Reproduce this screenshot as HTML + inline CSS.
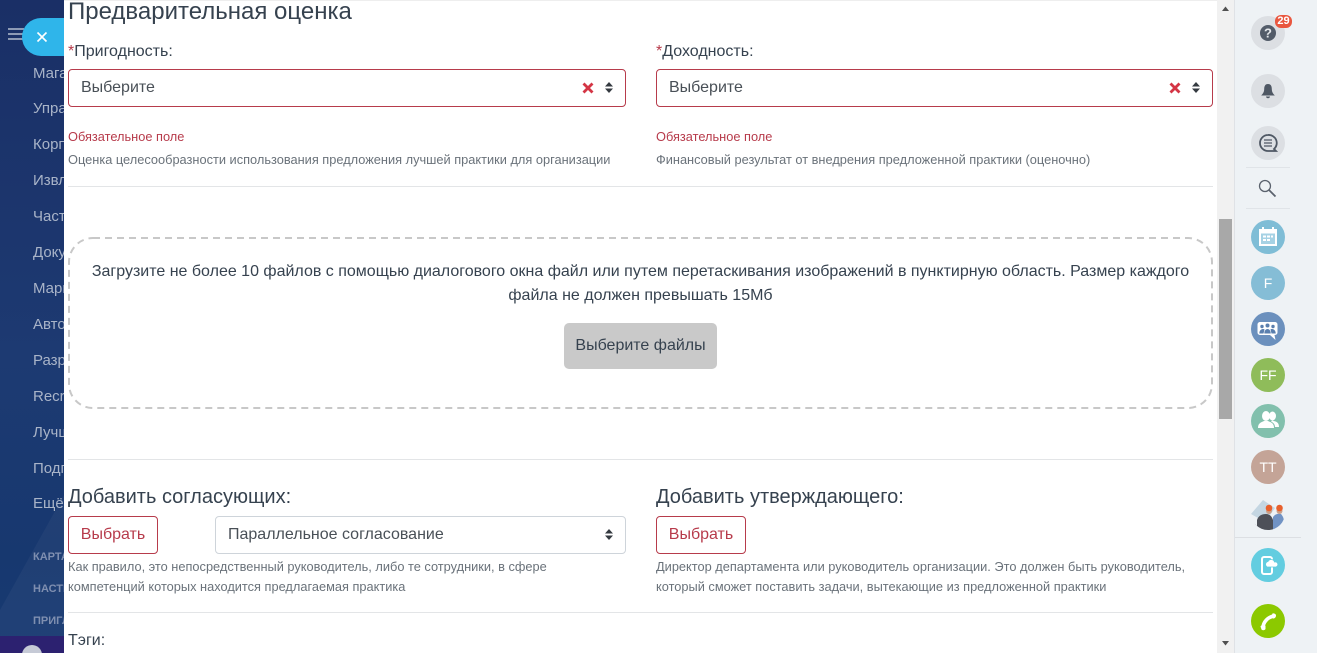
<!DOCTYPE html>
<html lang="ru">
<head>
<meta charset="utf-8">
<title>Предварительная оценка</title>
<style>
html,body{margin:0;padding:0;width:1317px;height:653px;overflow:hidden;background:#fff;}
body{position:relative;font-family:"Liberation Sans","Noto Sans CJK SC",sans-serif;color:#36424f;}
.a{position:absolute;white-space:nowrap;}
#side{position:absolute;left:0;top:0;width:64px;height:653px;overflow:hidden;background:linear-gradient(180deg,#1a2f66 0%,#1d3a72 55%,#17386f 85%,#173a72 100%);}
#side .m{position:absolute;left:33px;font-size:15px;color:#a9b4c8;white-space:nowrap;line-height:18px;}
#side .s{position:absolute;left:33px;font-size:11px;font-weight:bold;color:#7f8fb0;white-space:nowrap;line-height:12px;}
.sel{position:absolute;box-sizing:border-box;height:38px;border:1px solid #b73b4b;border-radius:4px;background:#fff;font-size:16px;line-height:36px;padding-left:12px;color:#495057;}
.lab{position:absolute;font-size:16px;line-height:20px;color:#36424f;white-space:nowrap;}
.lab i{font-style:normal;color:#b73b4b;}
.err{position:absolute;font-size:12.8px;line-height:16px;color:#b73b4b;white-space:nowrap;}
.hint{position:absolute;font-size:12.8px;line-height:20px;color:#6a727a;white-space:nowrap;}
.hr{position:absolute;height:1px;background:#e3e5e7;left:68px;width:1145px;}
.btn{position:absolute;box-sizing:border-box;top:516px;height:38px;border:1px solid #b73b4b;border-radius:4px;font-size:16px;line-height:36px;text-align:center;color:#b73b4b;background:#fff;}
.h2{position:absolute;font-size:20px;line-height:24px;color:#36424f;white-space:nowrap;}
.c{position:absolute;left:1251px;width:34px;height:34px;border-radius:50%;text-align:center;line-height:34px;color:#fff;font-size:14px;}
</style>
</head>
<body>
<div id="side">
  <svg style="position:absolute;left:0;top:380px" width="64" height="273"><polygon points="0,230 64,115 64,273 0,273" fill="#fff" opacity=".04"/></svg>
  <div style="position:absolute;left:0;top:636px;width:64px;height:17px;background:#2c2170"></div>
  <div style="position:absolute;left:22px;top:645px;width:20px;height:20px;border-radius:50%;background:#c6cad6"></div>
  <div class="m" style="top:65px">Магазин</div>
  <div class="m" style="top:100px">Управление</div>
  <div class="m" style="top:136px">Корпоративная</div>
  <div class="m" style="top:172px">Извлечения</div>
  <div class="m" style="top:208px">Частые</div>
  <div class="m" style="top:244px">Документы</div>
  <div class="m" style="top:280px">Маркетинг</div>
  <div class="m" style="top:316px">Автоматизация</div>
  <div class="m" style="top:352px">Разработка</div>
  <div class="m" style="top:388px">Recruitment</div>
  <div class="m" style="top:424px">Лучшие</div>
  <div class="m" style="top:460px">Подписки</div>
  <div class="m" style="top:495px">Ещё</div>
  <div class="s" style="top:551px">КАРТА</div>
  <div class="s" style="top:583px">НАСТРОЙКИ</div>
  <div class="s" style="top:615px">ПРИГЛАСИТЬ</div>
  <div style="position:absolute;left:8px;top:28px;width:16px;height:2px;background:#8d9ab5"></div>
  <div style="position:absolute;left:8px;top:33px;width:16px;height:2px;background:#8d9ab5"></div>
  <div style="position:absolute;left:8px;top:38px;width:16px;height:2px;background:#8d9ab5"></div>
  <div style="position:absolute;left:22px;top:18px;width:42px;height:38px;border-radius:19px 0 0 19px;background:#2fb5ea"></div>
</div>
<svg class="a" style="left:36px;top:31px" width="12" height="12"><path d="M1.5 1.5L10.5 10.5M10.5 1.5L1.5 10.5" stroke="#fff" stroke-width="1.6"/></svg>

<div class="a" style="left:64px;top:0;width:1153px;height:1px;background:#eee"></div>
<div class="a" style="left:68px;top:-2px;font-size:24px;line-height:28px;color:#36424f">Предварительная оценка</div>

<div class="lab" style="left:68px;top:42px"><i>*</i>Пригодность:</div>
<div class="sel" style="left:68px;top:69px;width:558px">Выберите</div>
<svg class="a" style="left:582px;top:82px" width="12" height="12"><path d="M1.500 1.500L10.500 10.500M10.500 1.500L1.500 10.500" stroke="#d43545" stroke-width="2.800"/></svg>
<svg class="a" style="left:604px;top:81px" width="10" height="13"><path d="M5 1L9 5.500H1ZM5 12L1 7.500H9Z" fill="#343a40"/></svg>
<div class="err" style="left:68px;top:129px">Обязательное поле</div>
<div class="hint" style="left:68px;top:150px">Оценка целесообразности использования предложения лучшей практики для организации</div>

<div class="lab" style="left:656px;top:42px"><i>*</i>Доходность:</div>
<div class="sel" style="left:656px;top:69px;width:557px">Выберите</div>
<svg class="a" style="left:1169px;top:82px" width="12" height="12"><path d="M1.500 1.500L10.500 10.500M10.500 1.500L1.500 10.500" stroke="#d43545" stroke-width="2.800"/></svg>
<svg class="a" style="left:1191px;top:81px" width="10" height="13"><path d="M5 1L9 5.500H1ZM5 12L1 7.500H9Z" fill="#343a40"/></svg>
<div class="err" style="left:656px;top:129px">Обязательное поле</div>
<div class="hint" style="left:656px;top:150px">Финансовый результат от внедрения предложенной практики (оценочно)</div>

<div class="hr" style="top:186px"></div>

<svg class="a" style="left:68px;top:237px" width="1145" height="172"><rect x="1" y="1" width="1143" height="170" rx="24" ry="24" fill="none" stroke="#c8c8c8" stroke-width="2" stroke-dasharray="7 5"/></svg>
<div class="a" style="left:84px;top:260px;width:1113px;white-space:normal;text-align:center;font-size:16px;line-height:24px;color:#36424f">Загрузите не более 10 файлов с помощью диалогового окна файл или путем перетаскивания изображений в пунктирную область. Размер каждого файла не должен превышать 15Мб</div>
<div class="a" style="left:564px;top:323px;width:153px;height:46px;border-radius:5px;background:#c9c9c9;text-align:center;font-size:16px;line-height:46px;color:#36424f">Выберите файлы</div>

<div class="hr" style="top:459px"></div>

<div class="h2" style="left:68px;top:485px">Добавить согласующих:</div>
<div class="btn" style="left:68px;width:90px">Выбрать</div>
<div class="sel" style="left:215px;top:516px;width:411px;border-color:#ced4da">Параллельное согласование</div>
<svg class="a" style="left:604px;top:528px" width="10" height="13"><path d="M5 1L9 5.500H1ZM5 12L1 7.500H9Z" fill="#343a40"/></svg>
<div class="hint" style="left:68px;top:557px">Как правило, это непосредственный руководитель, либо те сотрудники, в сфере<br>компетенций которых находится предлагаемая практика</div>

<div class="h2" style="left:656px;top:485px">Добавить утверждающего:</div>
<div class="btn" style="left:656px;width:90px">Выбрать</div>
<div class="hint" style="left:656px;top:557px">Директор департамента или руководитель организации. Это должен быть руководитель,<br>который сможет поставить задачи, вытекающие из предложенной практики</div>

<div class="hr" style="top:612px"></div>
<div class="lab" style="left:68px;top:631px">Тэги:</div>

<!-- scrollbar -->
<div class="a" style="left:1217px;top:0;width:17px;height:653px;background:#f1f1f1"></div>
<div class="a" style="left:1219px;top:219px;width:13px;height:200px;background:#a8a8a8"></div>
<svg class="a" style="left:1221px;top:6px" width="9" height="6"><path d="M4.500 0.500L8 5H1Z" fill="#505050"/></svg>
<svg class="a" style="left:1221px;top:640px" width="9" height="6"><path d="M4.500 5.500L8 1H1Z" fill="#505050"/></svg>

<!-- right panel -->
<div class="a" style="left:1234px;top:0;width:83px;height:653px;background:#eef2f5;border-left:1px solid #dfe2e6;box-sizing:border-box"></div>
<div class="a" style="left:1246px;top:167px;width:44px;height:1px;background:#e0e4e8"></div>
<div class="a" style="left:1246px;top:208px;width:44px;height:1px;background:#e0e4e8"></div>
<div class="a" style="left:1235px;top:537px;width:66px;height:1px;background:#dcdfe3"></div>

<div class="c" style="top:16px;background:#dcdfe3"></div>
<svg class="a" style="left:1260px;top:25px" width="16" height="16"><circle cx="8" cy="8" r="8" fill="#535c69"/><text x="8" y="12.500" text-anchor="middle" font-size="13" font-weight="bold" fill="#e5e8eb" font-family="Liberation Sans">?</text></svg>
<div class="a" style="left:1275px;top:15px;width:17px;height:13px;border-radius:6px;background:#e9573f;color:#fff;font-size:11px;font-weight:bold;line-height:13px;text-align:center">29</div>

<div class="c" style="top:74px;background:#dcdfe3"></div>
<svg class="a" style="left:1260px;top:83px" width="16" height="17"><path d="M8 1C5 1 4.200 3.500 4.200 6C4.200 9 3 10.500 1.200 12.500H14.800C13 10.500 11.800 9 11.800 6C11.800 3.500 11 1 8 1Z" fill="#4f5864"/><path d="M6 13.500H10C10 15.800 6 15.800 6 13.500Z" fill="#4f5864"/></svg>

<div class="c" style="top:126px;background:#dcdfe3"></div>
<svg class="a" style="left:1258px;top:133px" width="20" height="20" fill="none" stroke="#4f5864"><path d="M10 2A8 8 0 1 0 10 18H18L16 16A8 8 0 0 0 10 2Z" stroke-width="1.800"/><path d="M6 7H14M6 10H14M6 13H14" stroke-width="1.200"/></svg>

<svg class="a" style="left:1258px;top:179px" width="19" height="19" fill="none" stroke="#5a626d" stroke-width="1.300"><circle cx="7" cy="7" r="5.500"/><path d="M11 11L17.500 17.500" stroke-width="1.800"/></svg>

<div class="c" style="top:220px;background:#7fbdd6"></div>
<svg class="a" style="left:1258px;top:226px" width="20" height="21"><path d="M1 3H19V20H1Z" fill="#fff"/><path d="M5 1V5M15 1V5" stroke="#fff" stroke-width="2"/><path d="M3 7.500H17V18H3Z" fill="#a6d2e4"/><path d="M5 9.500H8V11.500H5ZM9 9.500H12V11.500H9ZM13 9.500H15V11.500H13ZM5 13H8V15H5ZM9 13H12V15H9Z" fill="#fff"/></svg>

<div class="c" style="top:266px;background:#85bdd6">F</div>

<div class="c" style="top:312px;background:#6b90bd"></div>
<svg class="a" style="left:1257px;top:321px" width="22" height="20"><path d="M3 1H18A2.500 2.500 0 0 1 20.500 3.500V11.500A2.500 2.500 0 0 1 18 14H17.500L18.500 19L13 14H3A2.500 2.500 0 0 1 0.500 11.500V3.500A2.500 2.500 0 0 1 3 1Z" fill="#fff"/><g fill="#5a7fae"><circle cx="10.500" cy="4.500" r="2"/><path d="M7.300 12.500C7.300 6.500 13.700 6.500 13.700 12.500Z"/><circle cx="5" cy="5.500" r="1.700"/><path d="M2.300 12.500C2.300 7.500 7 7.500 7.500 8.500L6.500 12.500Z"/><circle cx="16" cy="5.500" r="1.700"/><path d="M18.700 12.500C18.700 7.500 14 7.500 13.500 8.500L14.500 12.500Z"/></g></svg>

<div class="c" style="top:358px;background:#8fbc5a">FF</div>

<div class="c" style="top:404px;background:#82c0ad"></div>
<svg class="a" style="left:1258px;top:410px" width="21" height="19" fill="#fff"><ellipse cx="8" cy="6" rx="4" ry="5"/><path d="M0 18C0 13 3 12.500 6 11H10C13 12.500 16 13 16 18Z"/><ellipse cx="14.500" cy="6" rx="3.500" ry="4.500"/><path d="M14 10.500C18 11.500 21 12 21 17H17C17 14 15 12.500 13 11.500Z"/></svg>

<div class="c" style="top:450px;background:#c4a497">TT</div>

<svg class="a" style="left:1251px;top:496px" width="34" height="34"><defs><clipPath id="cp"><circle cx="17" cy="17" r="17"/></clipPath></defs><g clip-path="url(#cp)"><rect width="34" height="34" fill="#eef2f5"/><path d="M0 18L12 4L24 12L14 26Z" fill="#c4d6e2"/><path d="M6 34V24Q8 18 15 18Q20 18 22 24V34Z" fill="#4d5058"/><path d="M22 34V21Q25 17 30 18Q34 22 34 34Z" fill="#7193c4"/><circle cx="18" cy="15" r="3" fill="#c9a08a"/><circle cx="28.500" cy="15" r="3" fill="#c9a08a"/><circle cx="18" cy="12" r="3.300" fill="#e8602c"/><circle cx="28.500" cy="12" r="3.300" fill="#e8602c"/><path d="M4 28L10 34H0V26Z" fill="#6d7580"/></g></svg>

<div class="c" style="top:548px;background:#63cde0"></div>
<svg class="a" style="left:1261px;top:556px" width="17" height="19"><rect x="1" y="1" width="10" height="17" rx="2" fill="none" stroke="#fff" stroke-width="2"/><path d="M6 11A3 3 0 0 1 7 5.500A3.500 3.500 0 0 1 13.500 6A2.600 2.600 0 0 1 15 11Z" fill="#fff" stroke="#63cde0" stroke-width=".8"/></svg>

<div class="c" style="top:604px;background:#8cc900"></div>
<svg class="a" style="left:1259px;top:612px" width="18" height="19"><path d="M4 16C4 10 9 5 15 4" fill="none" stroke="#fff" stroke-width="3.600"/><path d="M1.500 14.500C1.500 13 6 12.500 6.500 14L6.500 17C6 18.500 3 18.500 2.500 17.500Z" fill="#fff"/><path d="M13.500 1.500C15 1 17 2 17 3.500C17 5.500 15.500 6.500 14 6.500L12 5Z" fill="#fff"/></svg>
</body>
</html>
